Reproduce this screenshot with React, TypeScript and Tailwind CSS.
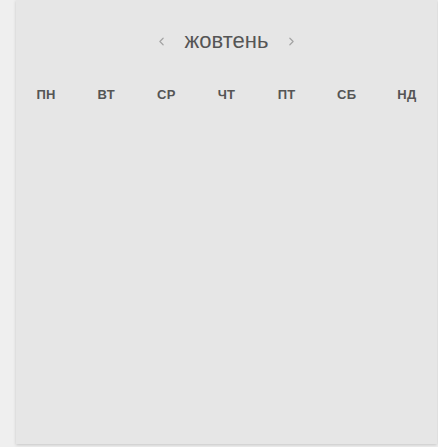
import { ChevronLeft, ChevronRight } from 'lucide-react';

const days = ['пн', 'вт', 'ср', 'чт', 'пт', 'сб', 'нд'];

export default function App() {
  return (
    <div className="h-[447px] w-[438px] overflow-hidden bg-[#efefef] pl-4 font-['Liberation_Sans',Arial,sans-serif]">
      <div className="h-[444px] w-[421px] bg-[#e6e6e6] shadow-[0_1px_3px_rgba(0,0,0,0.18)]">
        <div className="flex items-center justify-center gap-[17px] pt-[26px]">
          <ChevronLeft className="h-[13px] w-[13px] text-[#a3a3a3]" strokeWidth={2.2} />
          <span className="text-[22px] leading-[30px] text-[#555]">жовтень</span>
          <ChevronRight className="h-[13px] w-[13px] text-[#a3a3a3]" strokeWidth={2.2} />
        </div>
        <div className="mt-[31px] grid grid-cols-7">
          {days.map((d) => (
            <div key={d} className="text-center text-[13px] font-bold uppercase leading-4 tracking-[0.3px] text-[#555]">
              {d}
            </div>
          ))}
        </div>
      </div>
    </div>
  );
}
